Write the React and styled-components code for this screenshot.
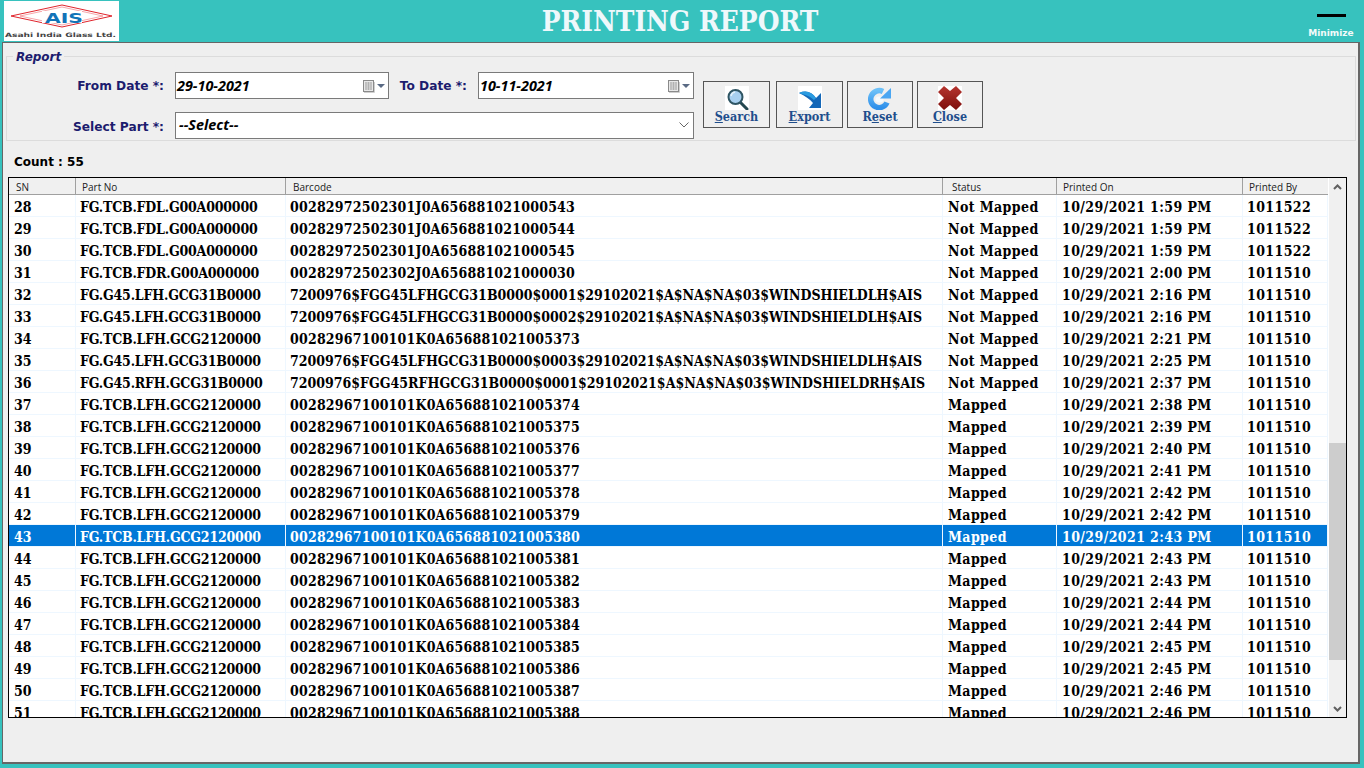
import React from "react";
import styled, { createGlobalStyle } from "styled-components";

const GlobalStyle = createGlobalStyle`
  html, body { margin: 0; padding: 0; background: #37c2be; }
  body { width: 1364px; height: 768px; overflow: hidden; font-family: "Liberation Serif", serif; }
  * { box-sizing: border-box; }
`;

const rows = [
  [28, "FG.TCB.FDL.G00A000000", "00282972502301J0A656881021000543", "Not Mapped", "10/29/2021 1:59 PM", "1011522"],
  [29, "FG.TCB.FDL.G00A000000", "00282972502301J0A656881021000544", "Not Mapped", "10/29/2021 1:59 PM", "1011522"],
  [30, "FG.TCB.FDL.G00A000000", "00282972502301J0A656881021000545", "Not Mapped", "10/29/2021 1:59 PM", "1011522"],
  [31, "FG.TCB.FDR.G00A000000", "00282972502302J0A656881021000030", "Not Mapped", "10/29/2021 2:00 PM", "1011510"],
  [32, "FG.G45.LFH.GCG31B0000", "7200976$FGG45LFHGCG31B0000$0001$29102021$A$NA$NA$03$WINDSHIELDLH$AIS", "Not Mapped", "10/29/2021 2:16 PM", "1011510"],
  [33, "FG.G45.LFH.GCG31B0000", "7200976$FGG45LFHGCG31B0000$0002$29102021$A$NA$NA$03$WINDSHIELDLH$AIS", "Not Mapped", "10/29/2021 2:16 PM", "1011510"],
  [34, "FG.TCB.LFH.GCG2120000", "00282967100101K0A656881021005373", "Not Mapped", "10/29/2021 2:21 PM", "1011510"],
  [35, "FG.G45.LFH.GCG31B0000", "7200976$FGG45LFHGCG31B0000$0003$29102021$A$NA$NA$03$WINDSHIELDLH$AIS", "Not Mapped", "10/29/2021 2:25 PM", "1011510"],
  [36, "FG.G45.RFH.GCG31B0000", "7200976$FGG45RFHGCG31B0000$0001$29102021$A$NA$NA$03$WINDSHIELDRH$AIS", "Not Mapped", "10/29/2021 2:37 PM", "1011510"],
  [37, "FG.TCB.LFH.GCG2120000", "00282967100101K0A656881021005374", "Mapped", "10/29/2021 2:38 PM", "1011510"],
  [38, "FG.TCB.LFH.GCG2120000", "00282967100101K0A656881021005375", "Mapped", "10/29/2021 2:39 PM", "1011510"],
  [39, "FG.TCB.LFH.GCG2120000", "00282967100101K0A656881021005376", "Mapped", "10/29/2021 2:40 PM", "1011510"],
  [40, "FG.TCB.LFH.GCG2120000", "00282967100101K0A656881021005377", "Mapped", "10/29/2021 2:41 PM", "1011510"],
  [41, "FG.TCB.LFH.GCG2120000", "00282967100101K0A656881021005378", "Mapped", "10/29/2021 2:42 PM", "1011510"],
  [42, "FG.TCB.LFH.GCG2120000", "00282967100101K0A656881021005379", "Mapped", "10/29/2021 2:42 PM", "1011510"],
  [43, "FG.TCB.LFH.GCG2120000", "00282967100101K0A656881021005380", "Mapped", "10/29/2021 2:43 PM", "1011510"],
  [44, "FG.TCB.LFH.GCG2120000", "00282967100101K0A656881021005381", "Mapped", "10/29/2021 2:43 PM", "1011510"],
  [45, "FG.TCB.LFH.GCG2120000", "00282967100101K0A656881021005382", "Mapped", "10/29/2021 2:43 PM", "1011510"],
  [46, "FG.TCB.LFH.GCG2120000", "00282967100101K0A656881021005383", "Mapped", "10/29/2021 2:44 PM", "1011510"],
  [47, "FG.TCB.LFH.GCG2120000", "00282967100101K0A656881021005384", "Mapped", "10/29/2021 2:44 PM", "1011510"],
  [48, "FG.TCB.LFH.GCG2120000", "00282967100101K0A656881021005385", "Mapped", "10/29/2021 2:45 PM", "1011510"],
  [49, "FG.TCB.LFH.GCG2120000", "00282967100101K0A656881021005386", "Mapped", "10/29/2021 2:45 PM", "1011510"],
  [50, "FG.TCB.LFH.GCG2120000", "00282967100101K0A656881021005387", "Mapped", "10/29/2021 2:46 PM", "1011510"],
  [51, "FG.TCB.LFH.GCG2120000", "00282967100101K0A656881021005388", "Mapped", "10/29/2021 2:46 PM", "1011510"],
];

const headers = ["SN", "Part No", "Barcode", "Status", "Printed On", "Printed By"];
const columns = "67px 210px 657px 114px 186px 85px";

const CalendarIcon = () => (
  <svg width="15" height="15" viewBox="0 0 15 15">
    <rect x="2.5" y="2.5" width="10" height="11" fill="#e8e8e8" stroke="#8a8a8a" />
    <path d="M4 5h7M4 7h7M4 9h7M4 11h7M5 4v8M7.500 4v8M10 4v8" stroke="#a9a9a9" strokeWidth="0.8" />
    <path d="M3 14.500h10.500V4" fill="none" stroke="#cfcfcf" />
  </svg>
);

const SearchIcon = () => (
  <svg width="24" height="24" viewBox="0 0 24 24">
    <rect width="24" height="24" fill="#fff" />
    <path d="M15 16l7 7" stroke="#24474f" strokeWidth="3" strokeLinecap="round" />
    <circle cx="10.500" cy="11" r="7" fill="#a8d0f0" stroke="#2f5563" strokeWidth="2" />
    <path d="M6 10a5 5 0 0 1 4-4" stroke="#e4f2fb" strokeWidth="1.500" fill="none" />
  </svg>
);

const ExportIcon = () => (
  <svg width="24" height="24" viewBox="0 0 24 24">
    <rect width="24" height="24" fill="#fff" />
    <path d="M1 7C8 4 14 6 18 12L23 7V22H11L15 17C12 13 7 10 1 7z" fill="#1568b8" />
    <path d="M1 7C8 4 14 6 18 12L16 14C12 10 7 9 1 7z" fill="#2a9be0" />
  </svg>
);

const ResetIcon = () => (
  <svg width="24" height="24" viewBox="0 0 24 24">
    <defs>
      <linearGradient id="resetBlue" x1="0" y1="0" x2="0" y2="1">
        <stop offset="0" stopColor="#6cc0f8" />
        <stop offset="1" stopColor="#2f90ea" />
      </linearGradient>
    </defs>
    <ellipse cx="11.500" cy="13.500" rx="4" ry="3" fill="#f4fafe" />
    <path d="M19 16.500A8.500 8.500 0 1 1 15 5.500" fill="none" stroke="url(#resetBlue)" strokeWidth="5.500" />
    <path d="M23 2V12.500H12z" fill="#4aa6f2" />
  </svg>
);

const CloseIcon = () => (
  <svg width="24" height="24" viewBox="0 0 24 24">
    <defs>
      <linearGradient id="closeRed" x1="0" y1="0" x2="0" y2="1">
        <stop offset="0" stopColor="#b5352f" />
        <stop offset="1" stopColor="#7e0f0c" />
      </linearGradient>
    </defs>
    <rect width="24" height="24" fill="#fff" />
    <path d="M6 0L12 5L18 0L24 6L18 12L24 18L18 24L12 19L6 24L0 18L6 12L0 6z" fill="url(#closeRed)" />
  </svg>
);

const Logo = () => (
  <LogoBox>
    <svg width="115" height="40" viewBox="0 0 115 40">
      <path d="M7 15L58 4l50 11-50 11z" fill="none" stroke="#e0242c" strokeWidth="1" />
      <path d="M16 15L58 6l41 9-41 9z" fill="none" stroke="#ee6a70" strokeWidth="0.6" />
      <rect x="38" y="10" width="40" height="12" fill="#fff" />
      <text x="41" y="22" textLength="38" lengthAdjust="spacingAndGlyphs" fontFamily="DejaVu Sans" fontWeight="700" fontSize="13.500" fill="#1173b8">AIS</text>
      <text x="1" y="36" textLength="111" lengthAdjust="spacingAndGlyphs" fontFamily="DejaVu Sans" fontWeight="700" fontSize="6" fill="#444">Asahi India Glass Ltd.</text>
    </svg>
  </LogoBox>
);

const actions = [
  { key: "S", rest: "earch", icon: <SearchIcon />, width: 67, gap: 6 },
  { key: "E", rest: "xport", icon: <ExportIcon />, width: 67, gap: 4 },
  { first: "R", key: "e", rest: "set", icon: <ResetIcon />, width: 66, gap: 4 },
  { key: "C", rest: "lose", icon: <CloseIcon />, width: 66, gap: 0 },
];

// the original font has wider digits than ours, so tune per column
const cellSpacing = (col, text) => {
  if (col === 1) return -0.2;
  if (col === 2) return String(text).includes("$") ? 0 : 0.2;
  if (col >= 3) return 0.4;
  return 0;
};

export default function App() {
  return (
    <Page>
      <GlobalStyle />
      <TopBar>
        <Logo />
        <Title>PRINTING REPORT</Title>
        <MinimizeBox>
          <MinimizeLine />
          <MinimizeText>Minimize</MinimizeText>
        </MinimizeBox>
      </TopBar>
      <Panel>
        <ReportGroup>
          <Legend>Report</Legend>
          <FormRow>
            <Label $width={157}>From Date *:</Label>
            <DateInput $width={214}>
              29-10-2021
              <DateIcons><CalendarIcon /><Caret /></DateIcons>
            </DateInput>
            <Label $width={78}>To Date *:</Label>
            <DateInput $width={216}>
              10-11-2021
              <DateIcons><CalendarIcon /><Caret /></DateIcons>
            </DateInput>
          </FormRow>
          <FormRow $second>
            <Label $width={157} $low>Select Part *:</Label>
            <SelectInput>
              --Select--
              <svg width="10" height="6" viewBox="0 0 10 6">
                <path d="M0.500 0.500L5 5l4.500-4.500" fill="none" stroke="#666" />
              </svg>
            </SelectInput>
          </FormRow>
          <ButtonRow>
            {actions.map((a) => (
              <ActionButton key={a.key} $width={a.width} $gap={a.gap}>
                {a.icon}
                <span>{a.first}<u>{a.key}</u>{a.rest}</span>
              </ActionButton>
            ))}
          </ButtonRow>
        </ReportGroup>
        <Count>Count : 55</Count>
        <GridFrame>
          <GridMain>
            <HeaderRow>
              {headers.map((h) => <HeaderCell key={h}>{h}</HeaderCell>)}
            </HeaderRow>
            <RowsArea>
              {rows.map((r) => (
                <Row key={r[0]} $selected={r[0] === 43}>
                  {r.map((c, i) => <Cell key={i} $spacing={cellSpacing(i, c)}>{c}</Cell>)}
                </Row>
              ))}
            </RowsArea>
          </GridMain>
          <Scrollbar>
            <ScrollArrow>
              <svg width="9" height="6" viewBox="0 0 9 6"><path d="M1 5l3.500-3.500L8 5" fill="none" stroke="#606060" strokeWidth="2" /></svg>
            </ScrollArrow>
            <ScrollSpace $height={248} />
            <ScrollThumb />
            <ScrollSpace $height={40} />
            <ScrollArrow>
              <svg width="9" height="6" viewBox="0 0 9 6"><path d="M1 1l3.500 3.500L8 1" fill="none" stroke="#606060" strokeWidth="2" /></svg>
            </ScrollArrow>
          </Scrollbar>
        </GridFrame>
      </Panel>
    </Page>
  );
}

const Page = styled.div`
  width: 1364px;
  height: 768px;
  display: flex;
  flex-direction: column;
  background: #37c2be;
  padding: 1px 4px 4px 2px;
`;

const TopBar = styled.header`
  height: 41px;
  flex: none;
  position: relative;
  display: flex;
  justify-content: space-between;
  padding-left: 2px;
`;

const LogoBox = styled.div`
  width: 115px;
  height: 40px;
  background: #fff;
`;

const Title = styled.h1`
  position: absolute;
  left: 500px;
  top: 3px;
  margin: 0;
  width: 356px;
  text-align: center;
  font-family: "DejaVu Serif Condensed", "DejaVu Serif", serif;
  font-stretch: condensed;
  font-size: 27.800px;
  line-height: 36px;
  font-weight: 700;
  color: #eef8fb;
  white-space: nowrap;
`;

const MinimizeBox = styled.div`
  width: 50px;
  margin-right: 4px;
  display: flex;
  flex-direction: column;
  align-items: center;
  padding-top: 13px;
`;

const MinimizeLine = styled.div`
  width: 29px;
  height: 3px;
  background: #000;
`;

const MinimizeText = styled.span`
  margin-top: 11px;
  font-family: "DejaVu Sans", sans-serif;
  font-size: 9px;
  line-height: 11px;
  font-weight: 700;
  color: #f2fbfa;
`;

const Panel = styled.main`
  flex: 1;
  background: #efefef;
  border: 1px solid #666;
  border-width: 1px 2px 2px 1px;
  padding: 13px 2px 0 3px;
  display: flex;
  flex-direction: column;
`;

const ReportGroup = styled.section`
  position: relative;
  width: 1350px;
  height: 85px;
  flex: none;
  border: 1px solid #dcdcdc;
  padding: 15px 0 0 0;
`;

const Legend = styled.span`
  position: absolute;
  left: 6px;
  top: -7px;
  padding: 0 3px;
  background: #efefef;
  font-family: "DejaVu Sans", sans-serif;
  font-size: 12px;
  line-height: 15px;
  font-style: italic;
  font-weight: 700;
  color: #1c1c6e;
`;

const FormRow = styled.div`
  display: flex;
  align-items: center;
  height: 27px;
  margin-top: ${(p) => (p.$second ? "13px" : "0")};
`;

const Label = styled.label`
  width: ${(p) => p.$width}px;
  flex: none;
  padding-top: ${(p) => (p.$low ? "3px" : "1px")};
  text-align: right;
  font-family: "DejaVu Sans", sans-serif;
  font-size: 12.200px;
  font-weight: 700;
  color: #1c1c6e;
  white-space: nowrap;
  margin-right: 11px;
`;

const DateInput = styled.div`
  width: ${(p) => p.$width}px;
  height: 27px;
  flex: none;
  display: flex;
  align-items: center;
  justify-content: space-between;
  background: #fff;
  border: 1px solid #7a7a7a;
  padding: 0 3px 0 1px;
  font-family: "Open Sans", sans-serif;
  font-size: 14.400px;
  font-style: italic;
  font-weight: 700;
  color: #000;
`;

const DateIcons = styled.span`
  display: flex;
  align-items: center;
  gap: 1px;
`;

const Caret = styled.span`
  width: 0;
  height: 0;
  border-left: 4px solid transparent;
  border-right: 4px solid transparent;
  border-top: 4px solid #5a6a84;
`;

const SelectInput = styled.div`
  width: 519px;
  height: 27px;
  display: flex;
  align-items: center;
  justify-content: space-between;
  background: #fff;
  border: 1px solid #7a7a7a;
  padding: 0 4px 2px 3px;
  font-family: "Open Sans", sans-serif;
  font-size: 14.400px;
  font-style: italic;
  font-weight: 700;
  color: #000;
`;

const ButtonRow = styled.div`
  position: absolute;
  left: 696px;
  top: 24px;
  display: flex;
`;

const ActionButton = styled.button`
  width: ${(p) => p.$width}px;
  height: 47px;
  margin-right: ${(p) => p.$gap}px;
  padding: 4px 0 0;
  background: #efefef;
  border: 1px solid #555;
  display: flex;
  flex-direction: column;
  align-items: center;
  font-family: "DejaVu Serif Condensed", "DejaVu Serif", serif;
  font-stretch: condensed;
  font-size: 12.500px;
  line-height: 13px;
  font-weight: 700;
  color: #1f4e8c;
`;

const Count = styled.div`
  margin: 14px 0 0 8px;
  height: 22px;
  flex: none;
  font-family: "DejaVu Sans", sans-serif;
  font-size: 12px;
  line-height: 15px;
  font-weight: 700;
  color: #000;
`;

const GridFrame = styled.div`
  width: 1339px;
  height: 541px;
  margin-left: 2px;
  flex: none;
  display: flex;
  background: #fff;
  border: 1px solid #000;
`;

const GridMain = styled.div`
  width: 1319px;
  overflow: hidden;
  display: flex;
  flex-direction: column;
`;

const HeaderRow = styled.div`
  display: grid;
  grid-template-columns: ${columns};
  height: 17px;
  flex: none;
  background: #f0f0f0;
  border-bottom: 1px solid #a0a0a0;
`;

const HeaderCell = styled.div`
  border-right: 1px solid #a0a0a0;
  padding-left: 6px;
  font-family: "Open Sans", sans-serif;
  font-size: 10px;
  line-height: 18px;
  color: #222;
  white-space: nowrap;
  &:nth-child(1), &:nth-child(3) { padding-left: 7px; }
  &:nth-child(4) { padding-left: 9px; }
  &:last-child { border-right: none; }
`;

const RowsArea = styled.div`
  flex: 1;
  overflow: hidden;
`;

const Row = styled.div`
  display: grid;
  grid-template-columns: ${columns};
  height: 22px;
  background: ${(p) => (p.$selected ? "#0078d7" : "#fff")};
  color: ${(p) => (p.$selected ? "#fff" : "#000")};
  border-bottom: 1px solid #eef7ff;
`;

const Cell = styled.div`
  border-right: 1px solid #eef7ff;
  padding-left: 5px;
  font-family: "DejaVu Serif Condensed", "DejaVu Serif", serif;
  font-stretch: condensed;
  font-size: 14px;
  line-height: 24px;
  font-weight: 700;
  letter-spacing: ${(p) => p.$spacing}px;
  white-space: nowrap;
  overflow: hidden;
  &:nth-child(2), &:nth-child(3), &:nth-child(6) { padding-left: 4px; }
`;

const Scrollbar = styled.div`
  flex: 1;
  display: flex;
  flex-direction: column;
  background: #f0f0f0;
  margin-left: 1px;
`;

const ScrollArrow = styled.div`
  height: 17px;
  flex: none;
  display: flex;
  align-items: center;
  justify-content: center;
`;

const ScrollSpace = styled.div`
  height: ${(p) => p.$height}px;
  flex: none;
`;

const ScrollThumb = styled.div`
  height: 217px;
  flex: none;
  background: #cdcdcd;
`;
